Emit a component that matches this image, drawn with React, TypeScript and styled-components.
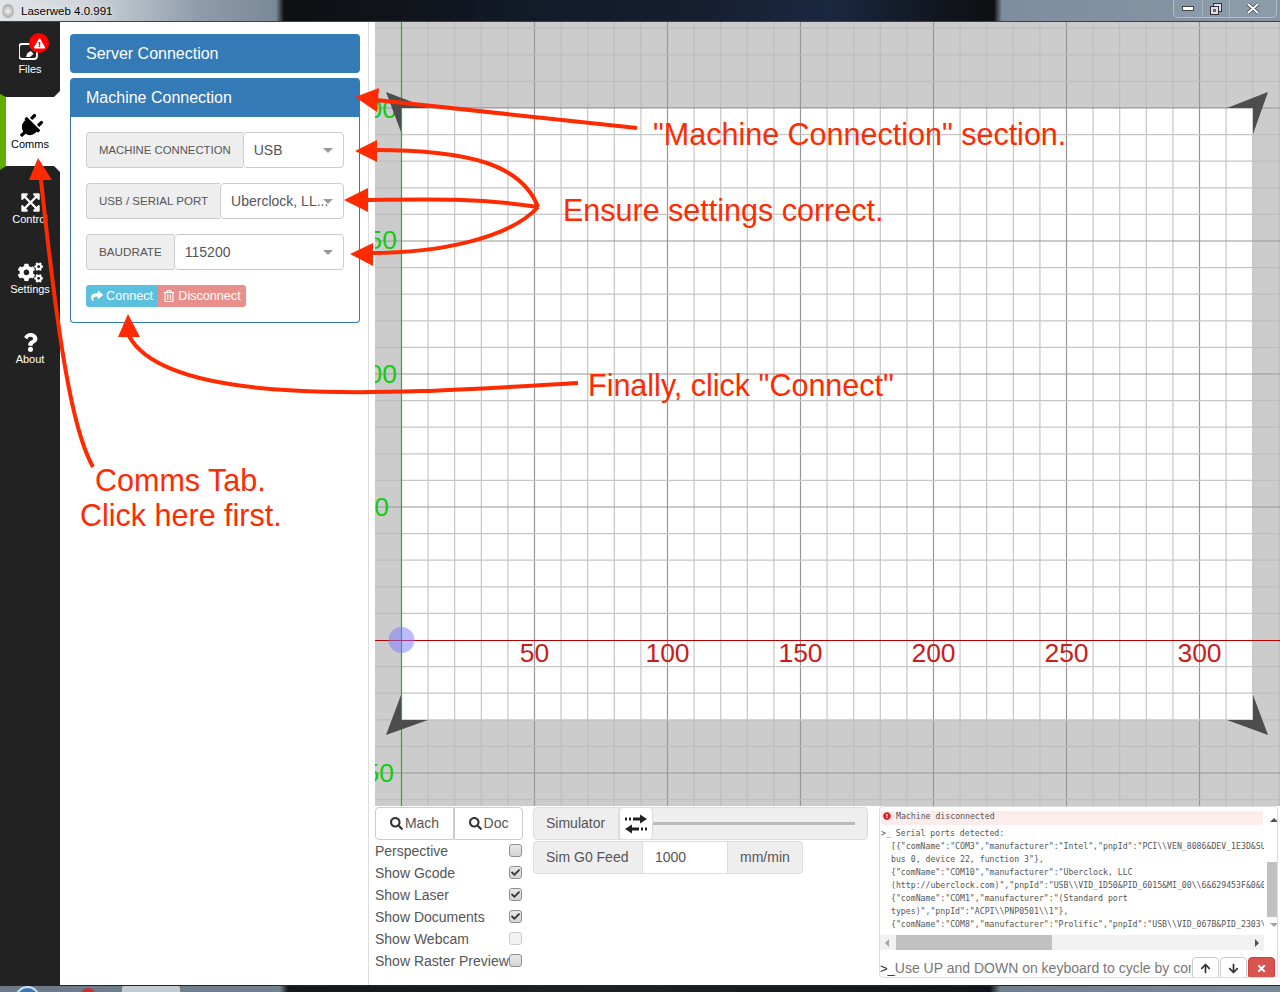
import React from 'react';
import styled, { createGlobalStyle } from 'styled-components';
import {
  FaArrowDown,
  FaArrowUp,
  FaCheck,
  FaCogs,
  FaExclamationCircle,
  FaExclamationTriangle,
  FaExpandArrowsAlt,
  FaPlug,
  FaQuestion,
  FaRegTrashAlt,
  FaSearch,
  FaShare,
  FaTimes,
} from 'react-icons/fa';

const GlobalStyle = createGlobalStyle`
  * {
    margin: 0;
    padding: 0;
    box-sizing: border-box;
  }

  html, body, #root {
    height: 100%;
  }

  body {
    font-family: 'Liberation Sans', Arial, sans-serif;
    font-size: 14px;
    color: #555;
    background: #fff;
    overflow: hidden;
  }
`;

const Page = styled.div`
  position: relative;
  width: 1280px;
  height: 992px;
  display: flex;
  flex-direction: column;
  overflow: hidden;
`;

const TitleBar = styled.div`
  height: 22px;
  flex: none;
  display: flex;
  align-items: flex-start;
  padding-left: 2px;
  border-bottom: 1px solid #39424c;
  background: linear-gradient(
    90deg,
    #e3e6e8 0,
    #cdd3d8 90px,
    #8e9baa 200px,
    #7a8998 276px,
    #0e1012 284px,
    #10141a 400px,
    #121a28 520px,
    #161f30 700px,
    #1a2840 830px,
    #11151e 940px,
    #0e0f11 994px,
    #7f8e9e 1002px,
    #8796a5 1280px
  );
`;

const AppIcon = styled.span`
  width: 12px;
  height: 14px;
  margin-top: 4px;
  border-radius: 50%;
  background: radial-gradient(circle at 50% 50%, #f4f4f4 0, #aaa 70%, #d5d5d5 100%);
`;

const TitleText = styled.span`
  margin: 3px 0 0 7px;
  font: 11.5px/16px 'Liberation Sans', Arial, sans-serif;
  color: #000;
  text-shadow: 0 0 6px #fff;
`;

const WindowControls = styled.div`
  margin-left: auto;
  margin-right: 3px;
  width: 104px;
  height: 18px;
  display: flex;
  border: 1px solid #b3bdc7;
  border-top: none;
  border-radius: 0 0 5px 5px;
  background: rgba(150, 165, 180, 0.35);
`;

const WindowButton = styled.div<{ $w: number }>`
  width: ${(p) => p.$w}px;
  display: flex;
  align-items: center;
  justify-content: center;
  border-right: 1px solid #a6b1bc;

  &:last-child {
    border-right: none;
  }
`;

const Body = styled.div`
  flex: 1;
  min-height: 0;
  display: flex;
`;

const Sidebar = styled.nav`
  width: 60px;
  flex: none;
  background: #222;
`;

const Tab = styled.div<{ $active?: boolean; $after?: number }>`
  position: relative;
  height: ${(p) => (p.$active ? 69 : 70)}px;
  margin-bottom: ${(p) => p.$after ?? 0}px;
  margin-left: ${(p) => (p.$active ? 6 : 0)}px;
  padding: 19px ${(p) => (p.$active ? 6 : 0)}px 0 0;
  display: flex;
  flex-direction: column;
  align-items: center;
  background: ${(p) => (p.$active ? '#fff' : 'transparent')};
  color: ${(p) => (p.$active ? '#000' : '#fff')};

  ${(p) =>
    p.$active &&
    `
    &::before {
      content: '';
      position: absolute;
      left: -6px;
      top: -3px;
      bottom: -4px;
      width: 6px;
      background: #5fae00;
      clip-path: polygon(0 0, 100% 3px, 100% calc(100% - 4px), 0 100%);
    }
    &::after {
      content: '';
      position: absolute;
      right: 0;
      top: -6px;
      bottom: -6px;
      width: 6px;
      background: #fff;
      clip-path: polygon(100% 0, 100% 100%, 0 calc(100% - 6px), 0 6px);
    }
  `}
`;

const TabIcon = styled.div`
  height: 22px;
  display: flex;
  align-items: center;
  justify-content: center;
`;

const PlugIcon = styled(FaPlug)`
  font-size: 26px;
  transform: rotate(45deg);
`;

const TabLabel = styled.span`
  font-size: 11px;
  line-height: 13px;
  white-space: nowrap;
`;

const Badge = styled.span`
  position: absolute;
  left: 29px;
  top: 11px;
  width: 20px;
  height: 20px;
  border-radius: 50%;
  background: #f00;
  color: #fff;
  display: flex;
  align-items: center;
  justify-content: center;
  font-size: 11px;
`;

const SidePanel = styled.aside`
  width: 309px;
  flex: none;
  padding: 12px 8px 0 10px;
  border-right: 1px solid #ddd;
  background: #fff;
`;

const PanelHeading = styled.div<{ $open?: boolean }>`
  height: 39px;
  padding: 0 16px;
  font-size: 16px;
  line-height: 39px;
  color: #fff;
  background: #337ab7;
  border-radius: ${(p) => (p.$open ? '4px 4px 0 0' : '4px')};
  margin-bottom: ${(p) => (p.$open ? 0 : 5)}px;
`;

const PanelBody = styled.div`
  height: 206px;
  padding: 15px 15px 0;
  border: 1px solid #337ab7;
  border-top: none;
  border-radius: 0 0 4px 4px;
  display: flex;
  flex-direction: column;
  gap: 15px;
`;

const InputGroup = styled.div`
  height: 36px;
  display: flex;
`;

const Addon = styled.span<{ $size: number }>`
  flex: none;
  padding: 0 12px;
  font-size: ${(p) => p.$size}px;
  line-height: 34px;
  color: #555;
  white-space: nowrap;
  background: #eee;
  border: 1px solid #ccc;
  border-right: none;
  border-radius: 4px 0 0 4px;
`;

const Select = styled.div`
  position: relative;
  flex: 1;
  min-width: 0;
  padding: 0 10px;
  font-size: 14px;
  line-height: 34px;
  color: #555;
  white-space: nowrap;
  overflow: hidden;
  background: #fff;
  border: 1px solid #ccc;
  border-radius: 4px;

  &::after {
    content: '';
    position: absolute;
    right: 10px;
    top: 15px;
    border-left: 5px solid transparent;
    border-right: 5px solid transparent;
    border-top: 5px solid #999;
  }
`;

const ButtonRow = styled.div`
  display: flex;
`;

const ActionButton = styled.button<{ $bg: string; $w: number; $round: string }>`
  width: ${(p) => p.$w}px;
  height: 22px;
  padding-bottom: 1px;
  display: flex;
  align-items: center;
  justify-content: center;
  gap: 3px;
  font: 12.6px 'Liberation Sans', Arial, sans-serif;
  color: #fff;
  border: none;
  background: ${(p) => p.$bg};
  border-radius: ${(p) => p.$round};
`;

const Main = styled.main`
  flex: 1;
  min-width: 0;
  padding-left: 6px;
  display: flex;
  flex-direction: column;
`;

const CanvasSvg = styled.svg`
  display: block;
  width: 905px;
  height: 784px;
  flex: none;
  font-family: 'Liberation Sans', Arial, sans-serif;
`;

const BottomRow = styled.div`
  flex: 1;
  min-height: 0;
  display: flex;
`;

const ViewColumn = styled.div`
  width: 148px;
  flex: none;
  padding-top: 1px;
`;

const ViewButtons = styled.div`
  display: flex;
`;

const ViewButton = styled.button<{ $w: number; $round: string }>`
  width: ${(p) => p.$w}px;
  height: 33px;
  padding-bottom: 1px;
  display: flex;
  align-items: center;
  justify-content: center;
  gap: 2px;
  font: 14px 'Liberation Sans', Arial, sans-serif;
  color: #555;
  background: #fff;
  border: 1px solid #ccc;
  border-radius: ${(p) => p.$round};

  svg {
    color: #333;
    font-size: 13px;
  }
`;

const CheckRow = styled.div`
  height: 22px;
  display: flex;
  align-items: center;
  justify-content: space-between;
  padding-right: 1px;
  line-height: 22px;
  white-space: nowrap;
  color: #555;
`;

const CheckBox = styled.span<{ $disabled?: boolean }>`
  width: 13px;
  height: 13px;
  flex: none;
  margin-top: -2px;
  display: flex;
  align-items: center;
  justify-content: center;
  font-size: 9px;
  color: #333;
  border: 1px solid ${(p) => (p.$disabled ? '#ccc' : '#8f8f8f')};
  border-radius: 3px;
  background: ${(p) => (p.$disabled ? '#f2f2f2' : 'linear-gradient(#e8e8e8, #d4d4d4)')};
`;

const SimColumn = styled.div`
  width: 335px;
  flex: none;
  margin-left: 10px;
  padding-top: 1px;
  display: flex;
  flex-direction: column;
  gap: 1px;
`;

const SimBar = styled.div`
  height: 33px;
  display: flex;
  background: #eee;
  border: 1px solid #ddd;
  border-radius: 4px;
`;

const SimLabel = styled.span<{ $w: number; $line?: boolean }>`
  width: ${(p) => p.$w}px;
  flex: none;
  padding-left: 12px;
  line-height: 31px;
  color: #555;
  border-right: ${(p) => (p.$line ? '1px solid #ddd' : 'none')};
`;

const SwapButton = styled.div`
  width: 34px;
  height: 33px;
  margin-top: -1px;
  flex: none;
  display: flex;
  align-items: center;
  justify-content: center;
  background: #fff;
  border: 1px solid #ddd;
  border-radius: 4px;
`;

const Track = styled.div`
  flex: 1;
  height: 3px;
  margin: 14px 12px 0 0;
  background: #bbb;
`;

const FeedBar = styled(SimBar)`
  width: 270px;
`;

const FeedInput = styled.span`
  width: 84px;
  flex: none;
  padding-left: 12px;
  line-height: 31px;
  color: #555;
  background: #fff;
`;

const FeedUnit = styled.span`
  flex: 1;
  padding-left: 12px;
  line-height: 31px;
  color: #555;
  border-left: 1px solid #ddd;
`;

const ConsoleBox = styled.div`
  width: 399px;
  height: 172px;
  flex: none;
  margin-left: 11px;
  background: #fff;
  border: 1px solid #ddd;
  border-radius: 4px;
  display: flex;
  flex-direction: column;
  overflow: hidden;
`;

const ConsoleView = styled.div`
  height: 143px;
  flex: none;
  display: flex;
`;

const ConsoleLeft = styled.div`
  width: 384px;
  flex: none;
  display: flex;
  flex-direction: column;
`;

const ConsoleText = styled.div`
  height: 128px;
  padding: 4px 1px 0;
  overflow: hidden;
  font: 8.2px/13px 'DejaVu Sans Mono', monospace;
  color: #555;
`;

const AlertLine = styled.div`
  height: 14px;
  margin-bottom: 2px;
  padding: 0 0 4px 2px;
  display: flex;
  align-items: center;
  gap: 5px;
  line-height: 10px;
  background: #fdecec;
  border-radius: 0 0 4px 4px;

  svg {
    color: #e02020;
    font-size: 8px;
  }
`;

const ConsoleLine = styled.div<{ $indent: number }>`
  height: 13px;
  padding-left: ${(p) => p.$indent}px;
  white-space: pre;
`;

const ScrollTrackV = styled.div`
  position: relative;
  flex: 1;
  margin-left: 1px;
  background: #fff;
`;

const ThumbV = styled.div`
  position: absolute;
  left: 2px;
  right: 0;
  top: 55px;
  height: 55px;
  background: #c1c1c1;
`;

const ScrollTrackH = styled.div`
  position: relative;
  height: 15px;
  background: #f1f1f1;
`;

const ThumbH = styled.div`
  position: absolute;
  left: 16px;
  top: 0;
  width: 156px;
  height: 15px;
  background: #c1c1c1;
`;

const ScrollArrow = styled.span<{ $dir: 'up' | 'down' | 'left' | 'right' }>`
  position: absolute;
  width: 0;
  height: 0;
  ${(p) =>
    p.$dir === 'up'
      ? 'top: 11px; left: 5px; border-left: 4px solid transparent; border-right: 4px solid transparent; border-bottom: 4px solid #505050;'
      : p.$dir === 'down'
        ? 'top: 116px; left: 5px; border-left: 4px solid transparent; border-right: 4px solid transparent; border-top: 4px solid #a3a3a3;'
        : p.$dir === 'left'
          ? 'top: 4px; left: 5px; border-top: 4px solid transparent; border-bottom: 4px solid transparent; border-right: 4px solid #a3a3a3;'
          : 'top: 4px; right: 5px; border-top: 4px solid transparent; border-bottom: 4px solid transparent; border-left: 4px solid #505050;'}
`;

const ConsoleInput = styled.div`
  flex: 1;
  display: flex;
  align-items: center;
  padding: 7px 2px 0 0;
`;

const Prompt = styled.span`
  flex: 1;
  min-width: 0;
  overflow: hidden;
  white-space: nowrap;
  font-size: 14px;
  color: #777;
`;

const PromptMark = styled.span`
  color: #222;
  font-size: 13px;
`;

const ConsoleButton = styled.button<{ $danger?: boolean; $w: number }>`
  width: ${(p) => p.$w}px;
  height: 22px;
  flex: none;
  margin-left: 1px;
  display: flex;
  align-items: center;
  justify-content: center;
  font-size: 11px;
  color: ${(p) => (p.$danger ? '#fff' : '#333')};
  background: ${(p) => (p.$danger ? '#d9534f' : '#fff')};
  border: 1px solid ${(p) => (p.$danger ? '#d43f3a' : '#ccc')};
  border-radius: 4px;
`;

const TaskBar = styled.div`
  position: relative;
  height: 7px;
  flex: none;
  border-top: 1px solid #20262c;
  background: linear-gradient(
    90deg,
    #6a7a88 0,
    #71818f 280px,
    #14181c 288px,
    #1c2126 600px,
    #10151a 990px,
    #6f7f8d 1000px,
    #7b8a98 1280px
  );
  overflow: hidden;
`;

const StartOrb = styled.span`
  position: absolute;
  left: 15px;
  top: 0;
  width: 25px;
  height: 25px;
  border-radius: 50%;
  border: 2px solid #cfe0ee;
  background: #3a78b0;
`;

const TaskDot = styled.span`
  position: absolute;
  left: 81px;
  top: 2px;
  width: 14px;
  height: 14px;
  border-radius: 50%;
  background: #c8322c;
`;

const TaskItem = styled.span`
  position: absolute;
  left: 122px;
  top: 0;
  width: 58px;
  height: 8px;
  border-radius: 2px 2px 0 0;
  background: #c3ccd3;
`;

const Annotations = styled.svg`
  position: absolute;
  left: 0;
  top: 0;
  pointer-events: none;
`;

const Note = styled.span<{ $x: number; $y: number }>`
  position: absolute;
  left: ${(p) => p.$x}px;
  top: ${(p) => p.$y}px;
  font-size: 30.5px;
  line-height: 36px;
  color: #ff2a00;
  white-space: nowrap;
  pointer-events: none;
`;

const X0 = 401.5;
const Y0 = 640;
const MM = 2.66;

const rangeOf = (from: number, to: number) => {
  const out: number[] = [];
  for (let i = from; i <= to; i += 10) out.push(i);
  return out;
};

const xsMm = rangeOf(-20, 330).filter((m) => m !== 0);
const ysMm = rangeOf(-60, 230).filter((m) => m !== 0);

function Grid({ x1, y1, x2, y2, minor, major }: { x1: number; y1: number; x2: number; y2: number; minor: string; major: string }) {
  return (
    <g strokeWidth={1.2}>
      {xsMm.map((m) => {
        const x = X0 + m * MM;
        if (x < x1 || x > x2) return null;
        return <line key={`x${m}`} x1={x} x2={x} y1={y1} y2={y2} stroke={m % 50 === 0 ? major : minor} />;
      })}
      {ysMm.map((m) => {
        const y = Y0 - m * MM;
        if (y < y1 || y > y2) return null;
        return <line key={`y${m}`} y1={y} y2={y} x1={x1} x2={x2} stroke={m % 50 === 0 ? major : minor} />;
      })}
    </g>
  );
}

const cornerMarks = [
  '386,92 428,108 401,108 401,132',
  '1268,92 1227,108 1253,108 1253,134',
  '386,735 428,720 401,720 401,695',
  '1268,735 1227,720 1253,720 1253,695',
];

const xLabels = [50, 100, 150, 200, 250, 300];

const yLabels = [
  { text: '200', x: 397, y: 118 },
  { text: '150', x: 397, y: 249 },
  { text: '100', x: 397, y: 383 },
  { text: '0', x: 389, y: 516 },
  { text: '-50', x: 394, y: 782 },
];

function Viewport() {
  return (
    <CanvasSvg viewBox="375 22 905 784">
      <rect x={375} y={22} width={905} height={784} fill="#ccc" />
      <Grid x1={375} y1={22} x2={1280} y2={806} minor="#bebebe" major="#979797" />
      <rect x={401} y={108} width={852} height={612} fill="#fff" />
      <Grid x1={401} y1={108} x2={1253} y2={720} minor="#c6c6c6" major="#969696" />
      {yLabels.map((l) => (
        <text key={l.text} x={l.x} y={l.y} textAnchor="end" fontSize={26.5} fill="#11cc11">
          {l.text}
        </text>
      ))}
      {xLabels.map((n) => (
        <text key={n} x={X0 + n * MM} y={662} textAnchor="middle" fontSize={26.5} fill="#cc1c1c">
          {n}
        </text>
      ))}
      <line x1={401.5} x2={401.5} y1={22} y2={806} stroke="#00c800" strokeWidth={1.2} />
      <line x1={375} x2={1280} y1={640.5} y2={640.5} stroke="#b80000" />
      {cornerMarks.map((p) => (
        <polygon key={p} points={p} fill="#4d4d4d" />
      ))}
      <circle cx={401.5} cy={640} r={13} fill="#7878ff" fillOpacity={0.5} />
    </CanvasSvg>
  );
}

const arrowPaths = [
  'M637 128 L376 100',
  'M538 207 C522 165 470 150 374 150',
  'M538 207 C480 198 430 199 366 200',
  'M538 207 C510 238 440 253 370 253',
  'M578 383 C420 392 170 412 129 336',
  'M93 467 C72 430 58 340 41 180',
];

const arrowHeads = [
  '355,97 379,88 377,112',
  '355,151 377,140 377,162',
  '344,200 368,188 368,212',
  '350,254 373,243 373,266',
  '128,314 118,337 140,337',
  '38,158 29,180 52,180',
];

const consoleLines = [
  { t: '[{"comName":"COM3","manufacturer":"Intel","pnpId":"PCI\\\\VEN_8086&DEV_1E3D&SUBSYS_00000000', i: 10 },
  { t: 'bus 0, device 22, function 3"},', i: 10 },
  { t: '{"comName":"COM10","manufacturer":"Uberclock, LLC', i: 10 },
  { t: '(http://uberclock.com)","pnpId":"USB\\\\VID_1D50&PID_6015&MI_00\\\\6&629453F&0&0000', i: 10 },
  { t: '{"comName":"COM1","manufacturer":"(Standard port', i: 10 },
  { t: 'types)","pnpId":"ACPI\\\\PNP0501\\\\1"},', i: 10 },
  { t: '{"comName":"COM8","manufacturer":"Prolific","pnpId":"USB\\\\VID_067B&PID_2303\\\\5&1', i: 10 },
];

const viewChecks = [
  { label: 'Perspective' },
  { label: 'Show Gcode', checked: true },
  { label: 'Show Laser', checked: true },
  { label: 'Show Documents', checked: true },
  { label: 'Show Webcam', disabled: true },
  { label: 'Show Raster Preview' },
];

function FilesIcon() {
  return (
    <svg width="22" height="22" viewBox="0 0 22 22">
      <rect x="0" y="3" width="18" height="15" rx="3" fill="none" stroke="#fff" strokeWidth="1.8" />
      <path d="M7 16 L8.5 12 L12 10 L14.5 13 L11 16 Z" fill="#fff" />
    </svg>
  );
}

function SwapIcon() {
  return (
    <svg width="24" height="20" viewBox="0 0 24 20" fill="#222">
      <rect x="1" y="3.5" width="2" height="3" />
      <rect x="5" y="3.5" width="2" height="3" />
      <path d="M9 3.5 H16 V0.5 L23 5 L16 9.5 V6.5 H9 Z" />
      <rect x="21" y="13.5" width="2" height="3" />
      <rect x="17" y="13.5" width="2" height="3" />
      <path d="M15 13.5 H8 V10.5 L1 15 L8 19.5 V16.5 H15 Z" />
    </svg>
  );
}

export default function App() {
  return (
    <>
      <GlobalStyle />
      <Page>
        <TitleBar>
          <AppIcon />
          <TitleText>Laserweb 4.0.991</TitleText>
          <WindowControls>
            <WindowButton $w={29}>
              <svg width="12" height="5" viewBox="0 0 12 5">
                <rect x="0.5" y="0.5" width="11" height="4" fill="#fff" stroke="#444" />
              </svg>
            </WindowButton>
            <WindowButton $w={27}>
              <svg width="12" height="12" viewBox="0 0 12 12">
                <rect x="3.5" y="0.5" width="8" height="8" fill="#dde" stroke="#333" />
                <rect x="0.5" y="3.5" width="8" height="8" fill="#dde" stroke="#333" />
                <rect x="3" y="6" width="3" height="3" fill="#667" />
              </svg>
            </WindowButton>
            <WindowButton $w={46}>
              <svg width="12" height="11" viewBox="0 0 12 11">
                <path d="M1 1 L11 10 M11 1 L1 10" stroke="#444" strokeWidth="3.4" />
                <path d="M1 1 L11 10 M11 1 L1 10" stroke="#fff" strokeWidth="2" />
              </svg>
            </WindowButton>
          </WindowControls>
        </TitleBar>

        <Body>
          <Sidebar>
            <Tab $after={5}>
              <TabIcon>
                <FilesIcon />
              </TabIcon>
              <TabLabel>Files</TabLabel>
              <Badge>
                <FaExclamationTriangle />
              </Badge>
            </Tab>
            <Tab $active $after={6}>
              <TabIcon>
                <PlugIcon />
              </TabIcon>
              <TabLabel>Comms</TabLabel>
            </Tab>
            <Tab>
              <TabIcon>
                <FaExpandArrowsAlt size={21} />
              </TabIcon>
              <TabLabel>Control</TabLabel>
            </Tab>
            <Tab>
              <TabIcon>
                <FaCogs size={25} />
              </TabIcon>
              <TabLabel>Settings</TabLabel>
            </Tab>
            <Tab>
              <TabIcon>
                <FaQuestion size={19} />
              </TabIcon>
              <TabLabel>About</TabLabel>
            </Tab>
          </Sidebar>

          <SidePanel>
            <PanelHeading>Server Connection</PanelHeading>
            <PanelHeading $open>Machine Connection</PanelHeading>
            <PanelBody>
              <InputGroup>
                <Addon $size={11.35}>MACHINE CONNECTION</Addon>
                <Select>USB</Select>
              </InputGroup>
              <InputGroup>
                <Addon $size={11.56}>USB / SERIAL PORT</Addon>
                <Select>Uberclock, LL...</Select>
              </InputGroup>
              <InputGroup>
                <Addon $size={11.7}>BAUDRATE</Addon>
                <Select>115200</Select>
              </InputGroup>
              <ButtonRow>
                <ActionButton $bg="#5bc0de" $w={72} $round="3px 0 0 3px">
                  <FaShare size={12} />
                  Connect
                </ActionButton>
                <ActionButton $bg="#e88f8c" $w={88} $round="0 3px 3px 0">
                  <FaRegTrashAlt size={12} />
                  Disconnect
                </ActionButton>
              </ButtonRow>
            </PanelBody>
          </SidePanel>

          <Main>
            <Viewport />
            <BottomRow>
              <ViewColumn>
                <ViewButtons>
                  <ViewButton $w={79} $round="4px 0 0 4px">
                    <FaSearch />
                    Mach
                  </ViewButton>
                  <ViewButton $w={69} $round="0 4px 4px 0">
                    <FaSearch />
                    Doc
                  </ViewButton>
                </ViewButtons>
                {viewChecks.map((c) => (
                  <CheckRow key={c.label}>
                    {c.label}
                    <CheckBox $disabled={c.disabled}>{c.checked && <FaCheck />}</CheckBox>
                  </CheckRow>
                ))}
              </ViewColumn>

              <SimColumn>
                <SimBar>
                  <SimLabel $w={85} $line>
                    Simulator
                  </SimLabel>
                  <SwapButton>
                    <SwapIcon />
                  </SwapButton>
                  <Track />
                </SimBar>
                <FeedBar>
                  <SimLabel $w={109} $line>
                    Sim G0 Feed
                  </SimLabel>
                  <FeedInput>1000</FeedInput>
                  <FeedUnit>mm/min</FeedUnit>
                </FeedBar>
              </SimColumn>

              <ConsoleBox>
                <ConsoleView>
                  <ConsoleLeft>
                    <ConsoleText>
                      <AlertLine>
                        <FaExclamationCircle />
                        Machine disconnected
                      </AlertLine>
                      <ConsoleLine $indent={0}>{'>_ Serial ports detected:'}</ConsoleLine>
                      {consoleLines.map((l) => (
                        <ConsoleLine key={l.t} $indent={l.i}>
                          {l.t}
                        </ConsoleLine>
                      ))}
                    </ConsoleText>
                    <ScrollTrackH>
                      <ScrollArrow $dir="left" />
                      <ThumbH />
                      <ScrollArrow $dir="right" />
                    </ScrollTrackH>
                  </ConsoleLeft>
                  <ScrollTrackV>
                    <ScrollArrow $dir="up" />
                    <ThumbV />
                    <ScrollArrow $dir="down" />
                  </ScrollTrackV>
                </ConsoleView>
                <ConsoleInput>
                  <Prompt>
                    <PromptMark>{'>_'}</PromptMark>
                    Use UP and DOWN on keyboard to cycle by commands
                  </Prompt>
                  <ConsoleButton $w={27}>
                    <FaArrowUp />
                  </ConsoleButton>
                  <ConsoleButton $w={27}>
                    <FaArrowDown />
                  </ConsoleButton>
                  <ConsoleButton $w={27} $danger>
                    <FaTimes />
                  </ConsoleButton>
                </ConsoleInput>
              </ConsoleBox>
            </BottomRow>
          </Main>
        </Body>

        <TaskBar>
          <StartOrb />
          <TaskDot />
          <TaskItem />
        </TaskBar>

        <Annotations width="1280" height="992" viewBox="0 0 1280 992">
          {arrowPaths.map((d) => (
            <path key={d} d={d} fill="none" stroke="#ff2a00" strokeWidth="4" />
          ))}
          {arrowHeads.map((p) => (
            <polygon key={p} points={p} fill="#ff2a00" />
          ))}
        </Annotations>
        <Note $x={653} $y={116}>
          "Machine Connection" section.
        </Note>
        <Note $x={563} $y={192}>
          Ensure settings correct.
        </Note>
        <Note $x={588} $y={367}>
          Finally, click "Connect"
        </Note>
        <Note $x={95} $y={462}>
          Comms Tab.
        </Note>
        <Note $x={80} $y={497}>
          Click here first.
        </Note>
      </Page>
    </>
  );
}
